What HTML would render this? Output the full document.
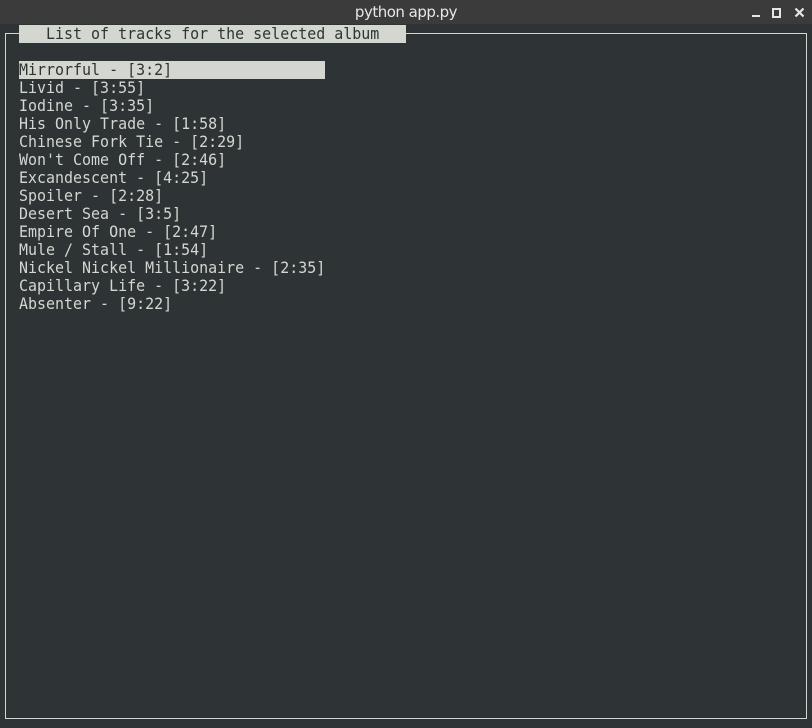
<!DOCTYPE html>
<html><head><meta charset="utf-8"><style>
html,body{margin:0;padding:0;width:812px;height:728px;overflow:hidden;background:#2e3436}
#tb{position:absolute;left:0;top:0;width:812px;height:24px;background:#3b3b3b;color:#e6e6e6;font:15px "DejaVu Sans","Liberation Sans",sans-serif;text-align:center;line-height:24px;letter-spacing:-0.5px}
.box{position:absolute;left:5px;top:33px;width:802px;height:686px;border:1.2px solid #d3d7cf;box-sizing:border-box}
.t{position:absolute;font:16px "DejaVu Sans Mono","Liberation Mono",monospace;color:#d3d7cf;white-space:pre;line-height:18px;transform:scaleX(0.935);transform-origin:0 0}
.hl{position:absolute;background:#d3d7cf}
.ctl{position:absolute;background:#e6e6e6}
</style></head><body>
<div id="tb">python app.py</div>
<div class="ctl" style="left:752px;top:15px;width:8px;height:2px"></div>
<div style="position:absolute;left:772px;top:8px;width:5px;height:6px;border:2px solid #e6e6e6"></div>
<svg style="position:absolute;left:794px;top:7px" width="11" height="11"><path d="M1.5 1.5L9.5 9.5M9.5 1.5L1.5 9.5" stroke="#e6e6e6" stroke-width="2.2"/></svg>
<div class="box"></div>
<div class="hl" style="left:19px;top:25px;width:387px;height:18px"></div>
<div class="hl" style="left:19px;top:61px;width:306px;height:18px"></div>
<div class="t" style="left:19px;top:25px;color:#2e3436">   List of tracks for the selected album</div>
<div class="t" style="left:19px;top:61px;color:#2e3436">Mirrorful - [3:2]</div>
<div class="t" style="left:19px;top:79px">Livid - [3:55]
Iodine - [3:35]
His Only Trade - [1:58]
Chinese Fork Tie - [2:29]
Won't Come Off - [2:46]
Excandescent - [4:25]
Spoiler - [2:28]
Desert Sea - [3:5]
Empire Of One - [2:47]
Mule / Stall - [1:54]
Nickel Nickel Millionaire - [2:35]
Capillary Life - [3:22]
Absenter - [9:22]</div>
</body></html>
